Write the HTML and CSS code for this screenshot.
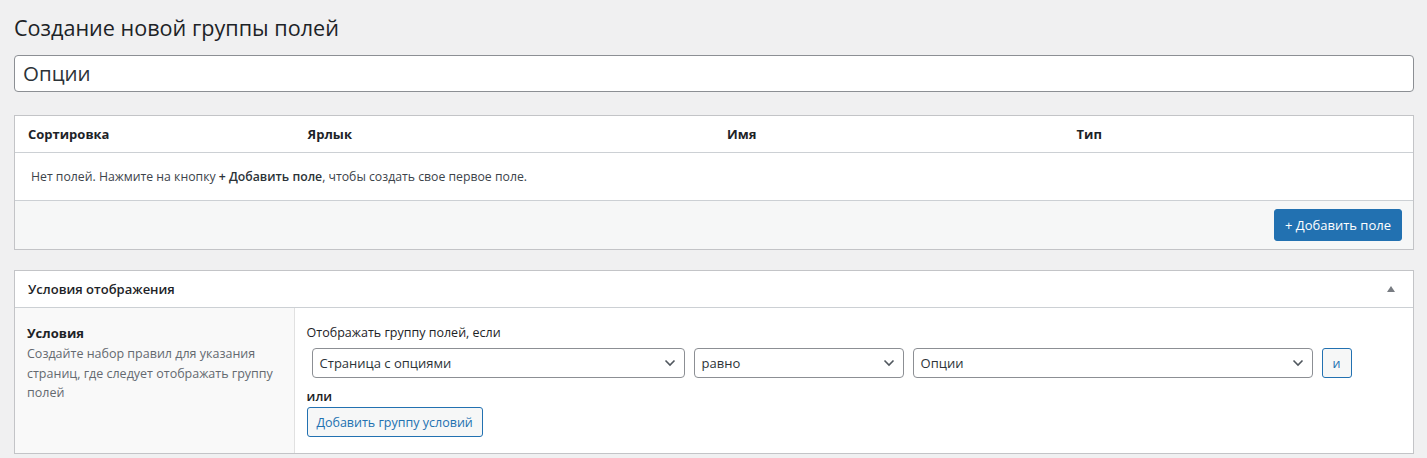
FILE: index.html
```html
<!DOCTYPE html>
<html lang="ru">
<head>
<meta charset="utf-8">
<title>Создание новой группы полей</title>
<link rel="stylesheet" href="styles.css">
</head>
<body>
<div class="wrap">
  <h1 class="page-title">Создание новой группы полей</h1>
  <div class="title-input">Опции</div>

  <div class="panel fields">
    <div class="fields-head">
      <div class="col">Сортировка</div>
      <div class="col">Ярлык</div>
      <div class="col">Имя</div>
      <div class="col">Тип</div>
    </div>
    <div class="fields-empty">Нет полей. Нажмите на кнопку <b>+ Добавить поле</b>, чтобы создать свое первое поле.</div>
    <div class="fields-foot">
      <button class="btn-primary">+ Добавить поле</button>
    </div>
  </div>

  <div class="panel conditions">
    <div class="cond-head">
      <span class="cond-title">Условия отображения</span>
      <span class="toggle"></span>
    </div>
    <div class="cond-body">
      <div class="cond-label">
        <div class="label-title">Условия</div>
        <p class="label-desc">Создайте набор правил для указания страниц, где следует отображать группу полей</p>
      </div>
      <div class="cond-input">
        <div class="rule-caption">Отображать группу полей, если</div>
        <div class="rule-row">
          <div class="select s-param">Страница с опциями<svg class="chev" viewBox="0 0 12 8"><path d="M1.5 1.5 6 6l4.5-4.5" fill="none" stroke="#50575e" stroke-width="1.6"/></svg></div>
          <div class="select s-op">равно<svg class="chev" viewBox="0 0 12 8"><path d="M1.5 1.5 6 6l4.5-4.5" fill="none" stroke="#50575e" stroke-width="1.6"/></svg></div>
          <div class="select s-val">Опции<svg class="chev" viewBox="0 0 12 8"><path d="M1.5 1.5 6 6l4.5-4.5" fill="none" stroke="#50575e" stroke-width="1.6"/></svg></div>
          <button class="btn-secondary btn-and">и</button>
        </div>
        <div class="or-label">или</div>
        <button class="btn-secondary btn-group">Добавить группу условий</button>
      </div>
    </div>
  </div>
</div>
</body>
</html>
```

FILE: styles.css
```css
html, body {
  margin: 0;
  padding: 0;
  background: #f0f0f1;
}
body {
  font-family: "Open Sans", "Noto Sans", sans-serif;
  font-size: 13px;
  color: #3c434a;
}
.wrap {
  padding: 13px 13px 0 14px;
}
.page-title {
  margin: 0;
  font-size: 21.6px;
  font-weight: 400;
  line-height: 30px;
  color: #1d2327;
}
.title-input {
  margin-top: 12px;
  height: 35px;
  border: 1px solid #8c8f94;
  border-radius: 4px;
  background: #fff;
  padding: 0 8px;
  font-size: 20.5px;
  line-height: 35px;
  color: #2c3338;
}
.panel {
  background: #fff;
  border: 1px solid #c3c4c7;
}
.fields {
  margin-top: 23px;
}
.fields-head {
  display: grid;
  grid-template-columns: 20% 30% 25% 25%;
  height: 36px;
  align-items: center;
  border-bottom: 1px solid #ccd0d4;
  font-weight: 700;
  color: #1d2327;
}
.fields-head .col {
  padding-left: 13px;
}
.fields-empty {
  height: 47px;
  line-height: 47px;
  padding-left: 16px;
  border-bottom: 1px solid #ccd0d4;
  font-size: 12.25px;
}
.fields-empty b {
  font-weight: 600;
  color: #2c3338;
}
.fields-foot {
  background: #f6f7f7;
  display: flex;
  justify-content: flex-end;
  padding: 8px 11px 8px 0;
}
.btn-primary {
  font-family: inherit;
  font-size: 13px;
  height: 32px;
  width: 128px;
  background: #2271b1;
  color: #fff;
  border: 1px solid #2271b1;
  border-radius: 3px;
  padding: 0 10px;
}
.conditions {
  margin-top: 20px;
}
.cond-head {
  height: 36px;
  display: flex;
  align-items: center;
  justify-content: space-between;
  padding: 0 18px 0 13px;
  border-bottom: 1px solid #ccd0d4;
}
.cond-title {
  font-weight: 600;
  color: #1d2327;
  font-size: 13px;
}
.toggle {
  width: 0;
  height: 0;
  border-left: 4px solid transparent;
  border-right: 4px solid transparent;
  border-bottom: 6px solid #787c82;
}
.cond-body {
  display: grid;
  grid-template-columns: 20% 80%;
}
.cond-label {
  background: #f9f9f9;
  border-right: 1px solid #e1e1e1;
  padding: 15px 12px 15px 12px;
}
.label-title {
  font-weight: 700;
  color: #1d2327;
  line-height: 20px;
}
.label-desc {
  margin: 1px 0 0;
  color: #646970;
  line-height: 19.5px;
  font-size: 12.5px;
}
.cond-input {
  padding: 15px 12px 16px 12px;
}
.rule-caption {
  line-height: 20px;
  color: #1d2327;
  font-size: 12.5px;
}
.rule-row {
  display: flex;
  gap: 9px;
  padding: 5px 0 0 5px;
}
.select {
  height: 28px;
  border: 1px solid #8c8f94;
  border-radius: 4px;
  background: #fff;
  display: flex;
  align-items: center;
  justify-content: space-between;
  padding: 0 8px 0 7px;
  font-size: 13px;
  color: #2c3338;
}
.s-param { width: 356px; }
.s-op { width: 193px; }
.s-val { width: 383px; }
.chev {
  width: 12px;
  height: 8px;
}
.btn-secondary {
  font-family: inherit;
  font-size: 12.5px;
  color: #2271b1;
  background: #f6f7f7;
  border: 1px solid #2271b1;
  border-radius: 3px;
  padding: 0;
}
.btn-and {
  width: 30px;
  height: 30px;
}
.or-label {
  margin-top: 8px;
  font-weight: 600;
  color: #1d2327;
  line-height: 20px;
}
.btn-group {
  display: block;
  margin-top: 1px;
  height: 30px;
  width: 176px;
}
```
